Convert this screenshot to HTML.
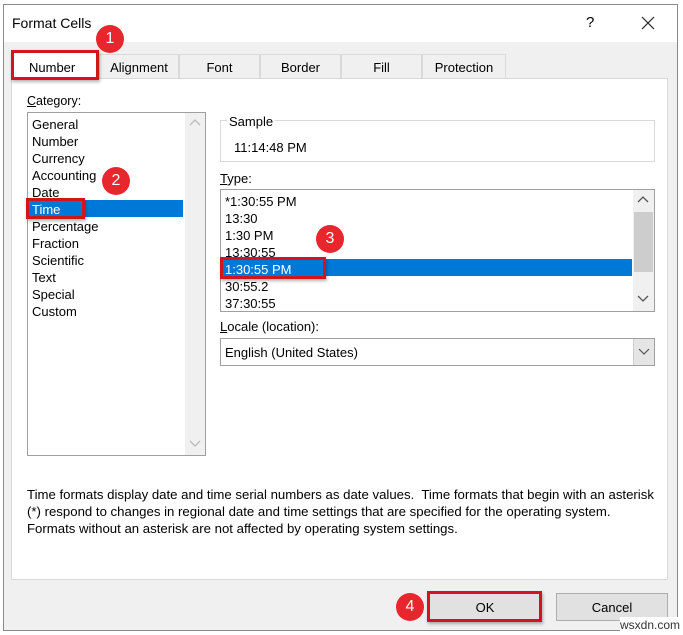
<!DOCTYPE html>
<html><head><style>
*{margin:0;padding:0;box-sizing:border-box}
body{width:683px;height:635px;background:#fff;position:relative;overflow:hidden;font-family:"Liberation Sans",sans-serif;font-size:12.5px;color:#000}
.a{position:absolute}
.t{position:absolute;white-space:nowrap;line-height:17px}
.badge{position:absolute;width:28px;height:28px;border-radius:50%;background:#e8262d;color:#fff;font-size:16px;text-align:center;line-height:28px}
.red{position:absolute;border:3px solid #d4141c;box-shadow:1px 2px 3px rgba(0,0,0,.3)}
.tab{position:absolute;top:54px;height:25px;background:#f0f0f0;border:1px solid #d9d9d9;border-bottom:none;text-align:center;line-height:26px;font-size:13px}
</style></head><body>
<div class="a" style="left:3px;top:4px;width:675px;height:627px;border:1px solid #8a8a8a;background:#f0f0f0"></div>
<div class="a" style="left:4px;top:5px;width:673px;height:37px;background:#fff"></div>
<div class="t" style="left:12px;top:15px;font-size:14px">Format Cells</div>
<div class="t" style="left:586px;top:14px;font-size:15px">?</div>
<svg class="a" style="left:641px;top:16px" width="14" height="14"><path d="M1 1L13 13M13 1L1 13" stroke="#222" stroke-width="1.2"/></svg>

<div class="tab" style="left:99px;width:80px">Alignment</div>
<div class="tab" style="left:179px;width:81px">Font</div>
<div class="tab" style="left:260px;width:81px">Border</div>
<div class="tab" style="left:341px;width:81px">Fill</div>
<div class="tab" style="left:422px;width:84px">Protection</div>
<div class="a" style="left:11px;top:78px;width:657px;height:502px;background:#fff;border:1px solid #d9d9d9"></div>
<div class="a" style="left:12px;top:52px;width:87px;height:28px;background:#fff"></div>
<div class="t" style="left:29px;top:59px;font-size:13px">Number</div>
<div class="red" style="left:11px;top:50px;width:88px;height:30px"></div>

<div class="t" style="left:27px;top:93px"><u>C</u>ategory:</div>
<div class="a" style="left:27px;top:112px;width:179px;height:344px;border:1px solid #a0a0a0"></div>
<div class="a" style="left:185px;top:113px;width:20px;height:342px;background:#f0f0f0"></div>
<svg class="a" style="left:188px;top:118px" width="14" height="10"><path d="M2 7L7 2L12 7" stroke="#bbb" fill="none" stroke-width="1.3"/></svg>
<svg class="a" style="left:188px;top:438px" width="14" height="10"><path d="M2 3L7 8L12 3" stroke="#bbb" fill="none" stroke-width="1.3"/></svg>
<div class="a" style="left:28px;top:200px;width:155px;height:17px;background:#0078d7"></div>
<div class="t" style="left:32px;top:116px;font-size:13px">General<br>Number<br>Currency<br>Accounting<br>Date<br><span style="color:#fff">Time</span><br>Percentage<br>Fraction<br>Scientific<br>Text<br>Special<br>Custom</div>
<div class="red" style="left:26px;top:198px;width:59px;height:21px"></div>

<div class="a" style="left:220px;top:120px;width:435px;height:42px;border:1px solid #d9d9d9"></div>
<div class="t" style="left:227px;top:113px;background:#fff;padding:0 2px;font-size:13px">Sample</div>
<div class="t" style="left:234px;top:139px;font-size:13px">11:14:48 PM</div>

<div class="t" style="left:220px;top:170px;font-size:13px"><u>T</u>ype:</div>
<div class="a" style="left:220px;top:189px;width:435px;height:123px;border:1px solid #a0a0a0"></div>
<div class="a" style="left:633px;top:190px;width:21px;height:121px;background:#f0f0f0"></div>
<div class="a" style="left:634px;top:212px;width:19px;height:60px;background:#cdcdcd"></div>
<svg class="a" style="left:636px;top:195px" width="14" height="10"><path d="M2 7L7 2L12 7" stroke="#555" fill="none" stroke-width="1.3"/></svg>
<svg class="a" style="left:636px;top:293px" width="14" height="10"><path d="M2 3L7 8L12 3" stroke="#555" fill="none" stroke-width="1.3"/></svg>
<div class="a" style="left:222px;top:259px;width:410px;height:17px;background:#0078d7"></div>
<div class="t" style="left:225px;top:193px;font-size:13px">*1:30:55 PM<br>13:30<br>1:30 PM<br>13:30:55<br><span style="color:#fff">1:30:55 PM</span><br>30:55.2<br>37:30:55</div>
<div class="red" style="left:220px;top:257px;width:106px;height:22px"></div>

<div class="t" style="left:220px;top:318px;font-size:13px"><u>L</u>ocale (location):</div>
<div class="a" style="left:220px;top:338px;width:435px;height:28px;border:1px solid #a0a0a0"></div>
<div class="a" style="left:633px;top:339px;width:21px;height:26px;background:#e5e5e5;border-left:1px solid #ccc"></div>
<svg class="a" style="left:637px;top:346px" width="14" height="10"><path d="M2 3L7 8L12 3" stroke="#555" fill="none" stroke-width="1.2"/></svg>
<div class="t" style="left:225px;top:344px;font-size:13px">English (United States)</div>

<div class="t" style="left:27px;top:487px;line-height:16.8px;font-size:13.2px">Time formats display date and time serial numbers as date values.&nbsp; Time formats that begin with an asterisk<br>(*) respond to changes in regional date and time settings that are specified for the operating system.<br>Formats without an asterisk are not affected by operating system settings.</div>

<div class="a" style="left:429px;top:593px;width:112px;height:27px;background:#e1e1e1;border:1px solid #adadad;text-align:center;line-height:27px;font-size:13px">OK</div>
<div class="red" style="left:427px;top:591px;width:115px;height:31px"></div>
<div class="a" style="left:556px;top:593px;width:112px;height:28px;background:#e1e1e1;border:1px solid #adadad;text-align:center;line-height:28px;font-size:13px">Cancel</div>
<div class="t" style="left:620px;top:617px;font-size:12px;color:#333;background:#fff">wsxdn.com</div>

<div class="badge" style="left:96px;top:25px">1</div>
<div class="badge" style="left:102px;top:167px">2</div>
<div class="badge" style="left:316px;top:225px">3</div>
<div class="badge" style="left:396px;top:593px">4</div>
</body></html>
